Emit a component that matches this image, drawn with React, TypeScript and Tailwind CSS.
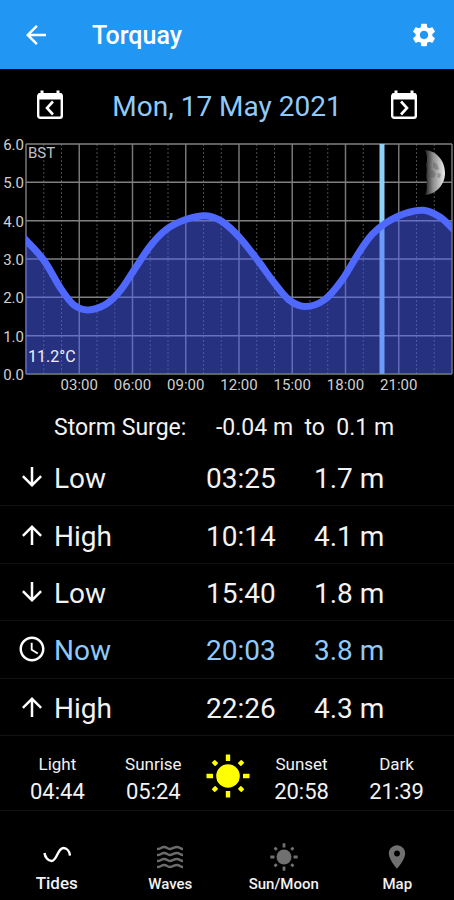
import { MdArrowBack, MdSettings, MdArrowDownward, MdArrowUpward, MdAccessTime, MdPlace } from "react-icons/md";

const FONT = "font-['Roboto','Liberation_Sans',sans-serif]";

type Tide = { kind: "Low" | "High" | "Now"; time: string; height: string };

const tides: Tide[] = [
  { kind: "Low", time: "03:25", height: "1.7 m" },
  { kind: "High", time: "10:14", height: "4.1 m" },
  { kind: "Low", time: "15:40", height: "1.8 m" },
  { kind: "Now", time: "20:03", height: "3.8 m" },
  { kind: "High", time: "22:26", height: "4.3 m" },
];

const LEFT = 26;
const TOP = 4;
const WIDTH = 426;
const HEIGHT = 230;
const BASE = TOP + HEIGHT;

const hourX = (h: number) => LEFT + (h / 24) * WIDTH;
const metreY = (m: number) => BASE - (m / 6) * HEIGHT;

// Tide heights in metres, keyed by hour of the day.
const curve: [number, number][] = [
  [-0.5, 3.7], [0, 3.49], [1, 2.97], [2, 2.2], [2.7, 1.8], [3.5, 1.67], [4.5, 1.82], [5.3, 2.17],
  [6.1, 2.72], [7, 3.34], [7.9, 3.77], [9, 4.03], [10.14, 4.13], [11, 3.99], [12, 3.58],
  [13, 3.0], [14, 2.37], [14.8, 1.94], [15.7, 1.76], [16.8, 1.93], [17.8, 2.45],
  [18.8, 3.2], [19.5, 3.64], [20.3, 3.95], [21.3, 4.18], [22.4, 4.27], [23.3, 4.1], [24, 3.81], [24.5, 3.56],
];

function smooth(points: [number, number][]) {
  const p = points.map(([h, m]) => [hourX(h), metreY(m)]);
  let d = `M${p[0][0]} ${p[0][1]}`;
  for (let i = 0; i < p.length - 1; i++) {
    const a = p[Math.max(i - 1, 0)];
    const b = p[i];
    const c = p[i + 1];
    const e = p[Math.min(i + 2, p.length - 1)];
    d += ` C${b[0] + (c[0] - a[0]) / 6} ${b[1] + (c[1] - a[1]) / 6} ${c[0] - (e[0] - b[0]) / 6} ${c[1] - (e[1] - b[1]) / 6} ${c[0]} ${c[1]}`;
  }
  return d;
}

const line = smooth(curve);
const hours = Array.from({ length: 25 }, (_, i) => i);

function TideChart() {
  return (
    <svg viewBox="0 0 454 260" className="block w-full overflow-visible" role="img" aria-label="Tide height through the day">
      <defs>
        <clipPath id="plot">
          <rect x={LEFT} y={TOP} width={WIDTH} height={HEIGHT} />
        </clipPath>
        <linearGradient id="moonShade" x1="0" x2="1">
          <stop offset="0" stopColor="#1c1c1c" />
          <stop offset="0.4" stopColor="#8c8c8c" />
          <stop offset="0.75" stopColor="#c4c4c4" />
          <stop offset="1" stopColor="#eeeeee" />
        </linearGradient>
      </defs>
      {hours.map((h) =>
        h % 3 === 0 ? (
          <line key={h} x1={hourX(h)} x2={hourX(h)} y1={TOP} y2={BASE} stroke="#777" strokeWidth="1.5" />
        ) : (
          <line key={h} x1={hourX(h)} x2={hourX(h)} y1={TOP} y2={BASE} stroke="#4c4c4c" strokeDasharray="2 2" />
        ),
      )}
      {[0, 1, 2, 3, 4, 5, 6].map((m) => (
        <g key={m}>
          <line x1={LEFT} x2={LEFT + WIDTH} y1={metreY(m)} y2={metreY(m)} stroke="#808080" strokeWidth="1.5" />
          <text x="24" y={metreY(m) + 6} textAnchor="end" fontSize="15" fill="#d0d0d0">
            {m.toFixed(1)}
          </text>
        </g>
      ))}
      <line x1="382" x2="382" y1={TOP} y2={BASE} stroke="#8fd0fa" strokeWidth="5" />
      <g clipPath="url(#plot)">
        <path d={`${line} V${BASE} H${hourX(-0.5)} Z`} fill="#4b64ff" fillOpacity="0.5" />
        <path d={line} fill="none" stroke="#4f69ff" strokeWidth="7" />
      </g>
      <g>
        <path d="M425 10C437 11 445 21 445 33C445 44 437 54 425 55C428 49 426 44 427 40C425 36 428 30 426 25C428 20 427 15 425 10Z" fill="url(#moonShade)" />
        <path d="M433 22l4 2 2 5-3 1-3-3zM428 31l5-1 3 4-2 4-5-1zM438 33l3 1-1 4-3-1zM428 18l3 1-1 4-3-1z" fill="#555" opacity="0.4" />
      </g>
      <text x="28" y="18" fontSize="15" fill="#c0c0c0">BST</text>
      <text x="28" y="222" fontSize="16" fill="#f0f0f0">11.2°C</text>
      {hours.filter((h) => h > 0 && h < 24 && h % 3 === 0).map((h) => (
        <text key={h} x={hourX(h)} y="250" textAnchor="middle" fontSize="15" fill="#d0d0d0">
          {`${String(h).padStart(2, "0")}:00`}
        </text>
      ))}
    </svg>
  );
}

function CalendarIcon({ next }: { next?: boolean }) {
  return (
    <svg viewBox="0 0 28 30" className="h-[30px] w-7" fill="none" stroke="white">
      <path d="M6 0.500v5M22 0.500v5" strokeWidth="3" />
      <rect x="2.200" y="4.200" width="23.600" height="23.600" rx="2" strokeWidth="2.400" />
      <path d="M2 6.500h24" strokeWidth="6" />
      <path d={next ? "M11 11.500l6 6.500-6 6.500" : "M17 11.500l-6 6.500 6 6.500"} strokeWidth="2.600" />
    </svg>
  );
}

function SunIcon({ className }: { className: string }) {
  return (
    <svg viewBox="-22 -22 44 44" className={className} fill="currentColor">
      <circle r="11.800" />
      {[0, 90, 180, 270].map((a) => (
        <rect key={a} x="-2.200" y="-21.500" width="4.400" height="6.500" rx="0.500" transform={`rotate(${a})`} />
      ))}
      {[45, 135, 225, 315].map((a) => (
        <rect key={a} x="-2.200" y="-21" width="4.400" height="5" rx="0.800" transform={`rotate(${a})`} />
      ))}
    </svg>
  );
}

function TideIcon() {
  return (
    <svg viewBox="0 0 28 28" className="size-7" fill="none" stroke="white" strokeWidth="2.400">
      <path d="M1.500 10C2 14 5 18 8.500 18C14 18 14.500 5 20.500 5C24 5 26.500 8.500 27 12.500" />
    </svg>
  );
}

function WavesIcon() {
  return (
    <svg viewBox="0 0 28 28" className="size-7" fill="none" stroke="#6c6c6c" strokeWidth="2.300">
      {[5, 11, 17, 23].map((y) => (
        <path key={y} d={`M1 ${y + 1}C5 ${y + 1} 5 ${y - 1} 8 ${y - 1}S12 ${y + 1} 14 ${y + 1}S18 ${y - 1} 21 ${y - 1}S24 ${y + 1} 27 ${y + 1}`} />
      ))}
    </svg>
  );
}

function SunTime({ label, time }: { label: string; time: string }) {
  return (
    <div className="text-center">
      <dt className="text-[17px] leading-7">{label}</dt>
      <dd className="text-[22px] leading-7">{time}</dd>
    </div>
  );
}

const rowIcon = {
  Low: <MdArrowDownward className="size-[30px]" />,
  High: <MdArrowUpward className="size-[30px]" />,
  Now: <MdAccessTime className="size-[30px]" />,
};

export default function App() {
  return (
    <div className={`min-h-screen bg-black text-[#f2f2f2] ${FONT}`}>
      <header className="flex h-[69px] items-center bg-[#2196f3] px-4 text-white">
        <button aria-label="Back" className="flex size-10 items-center justify-center">
          <MdArrowBack className="size-[30px]" />
        </button>
        <h1 className="ml-9 flex-1 pt-0.5 text-[25px] leading-8 font-medium">Torquay</h1>
        <button aria-label="Settings" className="flex size-7 items-center justify-center">
          <MdSettings className="size-7" />
        </button>
      </header>

      <main>
        <div className="flex h-[71px] items-center justify-between px-9">
          <button aria-label="Previous day"><CalendarIcon /></button>
          <h2 className="pt-1 text-[28px] text-[#90caf9]">Mon, 17 May 2021</h2>
          <button aria-label="Next day"><CalendarIcon next /></button>
        </div>

        <TideChart />

        <p className="flex h-[49px] items-center pt-2 pl-[54px] text-[23px] whitespace-pre">
          <span className="w-[162px]">Storm Surge:</span>
          <span>-0.04 m  to  0.1 m</span>
        </p>

        <table className="h-[287px] w-full table-fixed border-collapse text-[28px]">
          <tbody>
            {tides.map((t) => (
              <tr key={t.time} className={`border-b border-[#121212] ${t.kind === "Now" ? "text-[#90caf9]" : ""}`}>
                <td className="w-[54px] pl-[17px] text-white">{rowIcon[t.kind]}</td>
                <th scope="row" className="w-[152px] pt-1 text-left font-normal">{t.kind}</th>
                <td className="w-[108px] pt-1">{t.time}</td>
                <td className="pt-1">{t.height}</td>
              </tr>
            ))}
          </tbody>
        </table>

        <dl className="flex h-[75px] items-center justify-between border-b border-[#121212] px-[30px] pt-2.5">
          <SunTime label="Light" time="04:44" />
          <SunTime label="Sunrise" time="05:24" />
          <div className="-mx-4 pb-1"><SunIcon className="size-11 text-[#ffff00]" /></div>
          <SunTime label="Sunset" time="20:58" />
          <SunTime label="Dark" time="21:39" />
        </dl>
      </main>

      <nav className="grid h-[88px] grid-cols-4 pt-8 text-[15px] leading-6 font-medium">
        <button className="flex flex-col items-center"><TideIcon /><span className="text-[17px]">Tides</span></button>
        <button className="flex flex-col items-center"><WavesIcon /><span className="pt-px">Waves</span></button>
        <button className="flex flex-col items-center"><SunIcon className="size-7 text-[#707070]" /><span className="pt-px">Sun/Moon</span></button>
        <button className="flex flex-col items-center"><MdPlace className="size-7 text-[#707070]" /><span className="pt-px">Map</span></button>
      </nav>
    </div>
  );
}
